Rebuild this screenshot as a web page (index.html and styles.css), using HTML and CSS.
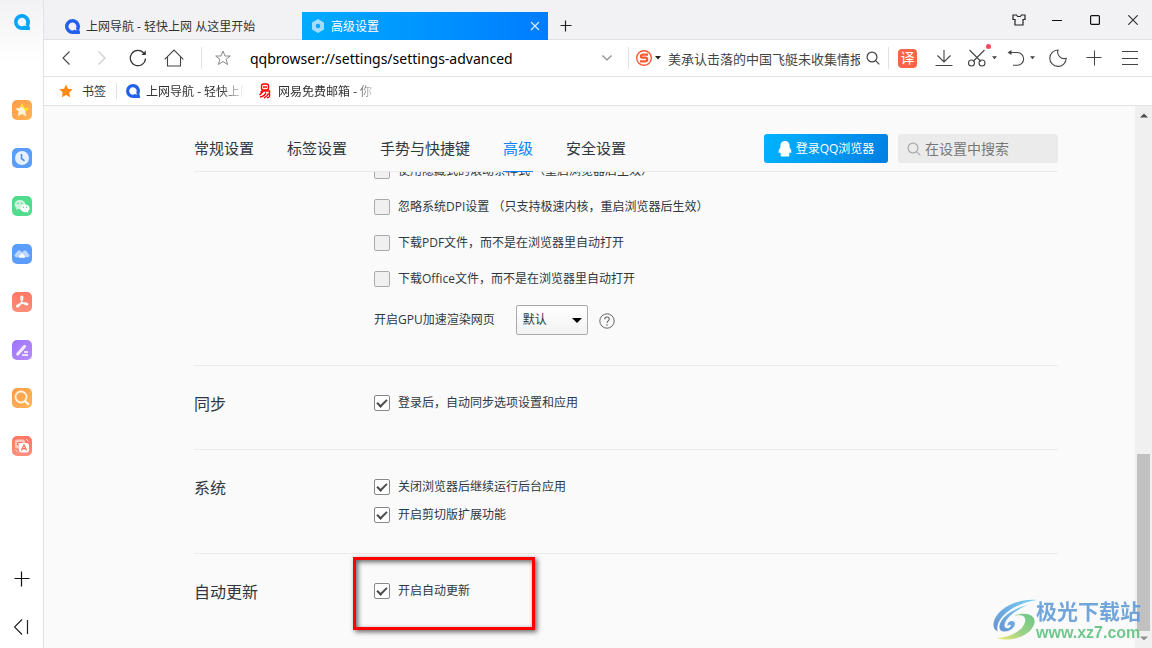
FILE: index.html
```html
<!DOCTYPE html>
<html lang="zh-CN">
<head>
<meta charset="utf-8">
<title>高级设置</title>
<link rel="stylesheet" href="styles.css">
</head>
<body>
<svg class="defs" aria-hidden="true">
  <symbol id="q-logo" viewBox="0 0 16 16">
    <path fill-rule="evenodd" fill="currentColor" d="M8 0a8 8 0 0 1 7.3 11.2c-.2.9.1 1.600.7 2.300V15a1 1 0 0 1-1 1H8A8 8 0 0 1 8 0ZM8 3.800a4.200 4.200 0 1 0 2.200 7.700c1.100.6 2.200.5 2.700.2-.9-.4-1.300-1-1.200-1.800A4.200 4.200 0 0 0 8 3.800Z"/>
  </symbol>
  <symbol id="caret" viewBox="0 0 6 4"><path d="M0 0h6L3 3.500z" fill="currentColor"/></symbol>
  <symbol id="lens" viewBox="0 0 14 14"><g fill="none" stroke="currentColor" stroke-width="1.200"><circle cx="6" cy="6" r="4.900"/><path d="m9.600 9.600 3.700 3.700"/></g></symbol>
</svg>

<aside class="sidebar">
  <button class="side-btn side-logo" aria-label="QQ浏览器"><svg width="16" height="16"><use href="#q-logo"/></svg></button>
  <nav class="side-apps" aria-label="侧边栏">
    <button class="app app-orange" aria-label="收藏"><svg viewBox="0 0 20 20"><path d="m10 3.500 2 4.300 4.700.6-3.400 3.200.9 4.700-4.200-2.300-4.200 2.300.9-4.700-3.400-3.200 4.700-.6z" fill="#fff3d8"/><path d="m10 3.500 2 4.300 4.700.6-3.400 3.200-1.300-3.400-3.300-1.600z" fill="#ffe600"/></svg></button>
    <button class="app app-blue" aria-label="历史"><svg viewBox="0 0 20 20"><circle cx="10" cy="10" r="7" fill="#e6f0ff"/><path d="M9.500 6v4.500l3 2.300" fill="none" stroke="#4c8ff5" stroke-width="1.600"/></svg></button>
    <button class="app app-green" aria-label="微信"><svg viewBox="0 0 20 20"><path d="M8 4c-3.100 0-5.500 2-5.500 4.600 0 1.500.8 2.800 2 3.600L4 14l2.100-1.100 1.900.3c3 0 5.400-2 5.400-4.600S11 4 8 4Z" fill="#c9f5dc"/><path d="M13 8.500c-2.600 0-4.600 1.700-4.600 3.800s2 3.900 4.600 3.900l1.500-.2 1.800.8-.4-1.500c1-.7 1.700-1.800 1.700-3 0-2.100-2-3.800-4.600-3.800Z" fill="#fff"/><g fill="#4cd98b"><circle cx="6.200" cy="7.200" r=".8"/><circle cx="9.800" cy="7.200" r=".8"/><circle cx="11.500" cy="11.300" r=".7"/><circle cx="14.500" cy="11.300" r=".7"/></g></svg></button>
    <button class="app app-blue" aria-label="文档"><svg viewBox="0 0 20 20"><path d="M2.200 11.500 6 6.500h2l2 2 2-2h2l3.800 5-1.800 2-2-.5-1.500 1-2.500-1-2.500 1-1.500-1-2 .5z" fill="#bcd6ff"/><path d="m7 12.200 3-3 3 3-1.500 2-1.500-1-1.500 1z" fill="#fff"/></svg></button>
    <button class="app app-red" aria-label="PDF"><svg viewBox="0 0 20 20"><path d="M9.500 4.300c1.600-.2 1.400 2 .6 4-.8 2.200-2.600 5.700-4.300 6.500-1.500.5-1.300-1.300.3-2.100 2.500-1.300 5.500-1.800 8-1.600 2.200.3 2 2 .1 1.600-2.300-.7-4.600-3.300-5.200-5.600-.3-1.200-.3-2.500.5-2.800Z" fill="none" stroke="#fff" stroke-width="1.400"/></svg></button>
    <button class="app app-purple" aria-label="笔记"><svg viewBox="0 0 20 20"><path d="m5.800 14 6.700-7.500" stroke="#f2eaff" stroke-width="3.200" stroke-linecap="round"/><path d="M12 12h4M10 15h6" stroke="#fff" stroke-width="1.500"/></svg></button>
    <button class="app app-orange" aria-label="搜索"><svg viewBox="0 0 20 20"><circle cx="9" cy="9" r="5.500" fill="none" stroke="#fff3e2" stroke-width="1.800"/><path d="m13 13 3.800 3.800" stroke="#fff" stroke-width="2"/></svg></button>
    <button class="app app-red" aria-label="翻译"><svg viewBox="0 0 20 20"><rect x="3" y="3.500" width="10" height="9" rx="2" fill="#ffc9be"/><path d="M5.500 6.500h5V9h-5z" fill="none" stroke="#ff7b68"/><rect x="7" y="7" width="10" height="9.500" rx="2.500" fill="#fff"/><path d="m9.300 14.500 2.700-5.500 2.700 5.500m-4.500-1.800h3.600" fill="none" stroke="#ff6a56" stroke-width="1.200"/><path d="m14 3 2.500 2.500M3.500 13.500 6 16.500" stroke="#ffd6ce"/></svg></button>
  </nav>
  <button class="side-btn side-foot" aria-label="添加"><svg width="16" height="16" viewBox="0 0 16 16"><path d="M.5 7.500h15M7.500.5v15" stroke="#111" stroke-width="1.200"/></svg></button>
  <button class="side-btn side-foot" aria-label="收起侧边栏"><svg width="16" height="16" viewBox="0 0 16 16"><path d="m8 .5-7.500 7.500L8 15.500M13.500 1v14" fill="none" stroke="#222" stroke-width="1.200"/></svg></button>
</aside>

<div class="browser">
  <header class="tabbar">
    <div class="tab">
      <svg class="blue-logo" width="15" height="15"><use href="#q-logo"/></svg>
      <span class="tab-title">上网导航 - 轻快上网 从这里开始</span>
    </div>
    <div class="tab tab-active">
      <svg width="14" height="14" viewBox="0 0 14 14"><path fill-rule="evenodd" d="m7 0 6 3.500v7L7 14l-6-3.500v-7zM7 4.800a2.200 2.200 0 1 0 0 4.400 2.200 2.200 0 0 0 0-4.400Z" fill="#a3dcff"/></svg>
      <span class="tab-title">高级设置</span>
      <button class="tab-close" aria-label="关闭标签"><svg width="10" height="10" viewBox="0 0 10 10"><path d="m1 1 8 8M9 1 1 9" stroke="#d8eeff" stroke-width="1.200"/></svg></button>
    </div>
    <button class="new-tab" aria-label="新标签"><svg width="12" height="12" viewBox="0 0 12 12"><path d="M.5 5.500h11M5.500.5v11" stroke="#222" stroke-width="1.200"/></svg></button>
    <div class="window-btns">
      <button aria-label="皮肤"><svg width="14" height="12" viewBox="0 0 14 12"><path d="M4.500 1H1v4.500h2V11h8V5.500h2V1H9.500L8.300 2.500H5.700z" fill="none" stroke="#222" stroke-width="1.200"/></svg></button>
      <button aria-label="最小化"><svg width="10" height="10" viewBox="0 0 10 10"><path d="M0 5.500h10" stroke="#111"/></svg></button>
      <button aria-label="最大化"><svg width="10" height="10" viewBox="0 0 10 10"><rect x=".6" y=".6" width="8.800" height="8.800" rx="1" fill="none" stroke="#111" stroke-width="1.200"/></svg></button>
      <button aria-label="关闭"><svg width="10" height="10" viewBox="0 0 10 10"><path d="m.3.300 9.400 9.400M9.700.3.300 9.700" stroke="#333" stroke-width="1.200"/></svg></button>
    </div>
  </header>

  <div class="toolbar">
    <button class="tool" aria-label="后退"><svg width="8" height="14" viewBox="0 0 8 14"><path d="M7.500.5 1 7l6.500 6.500" fill="none" stroke="#444" stroke-width="1.100"/></svg></button>
    <button class="tool" aria-label="前进"><svg width="8" height="14" viewBox="0 0 8 14"><path d="M.5.500 7 7 .5 13.500" fill="none" stroke="#ccc" stroke-width="1.200"/></svg></button>
    <button class="tool" aria-label="刷新"><svg width="18" height="18" viewBox="0 0 18 18"><path d="M16.500 9.500A7.600 7.600 0 1 1 15 4.500" fill="none" stroke="#333" stroke-width="1.200"/><path d="M16.800 1.500v4.500h-4.500z" fill="#333"/></svg></button>
    <button class="tool" aria-label="主页"><svg width="20" height="18" viewBox="0 0 20 18"><path d="M.7 10.300 10 1l9.300 9.300M3.500 8v9h13V8" fill="none" stroke="#444" stroke-width="1.100"/></svg></button>
    <i class="sep sep-nav"></i>
    <button class="tool tool-star" aria-label="收藏此页"><svg width="16" height="16" viewBox="0 0 16 16"><path d="m8 1 2 5h5.300l-4.200 3.300 1.500 5.200L8 11.500l-4.600 3 1.500-5.200L.7 6H6z" fill="none" stroke="#888"/></svg></button>
    <input class="url" type="text" aria-label="地址栏" value="qqbrowser://settings/settings-advanced">
    <button class="tool tool-drop" aria-label="展开地址"><svg width="10" height="6" viewBox="0 0 10 6"><path d="m.5.500 4.500 4.500L9.500.5" fill="none" stroke="#888" stroke-width="1.200"/></svg></button>
    <i class="sep"></i>
    <button class="engine" aria-label="搜索引擎"><svg width="16" height="16" viewBox="0 0 16 16"><circle cx="8" cy="8" r="7.300" fill="none" stroke="#fa5a32" stroke-width="1.400"/><path d="M12 4.700H7c-2.800 0-2.800 3 0 3h2.200c2.700 0 2.700 3.600 0 3.600H4" fill="none" stroke="#fa5a32" stroke-width="2.200"/></svg><svg width="6" height="4" class="dark"><use href="#caret"/></svg></button>
    <input class="web-search" type="text" aria-label="网页搜索" value="美承认击落的中国飞艇未收集情报">
    <button class="go" aria-label="搜索"><svg width="14" height="14"><use href="#lens"/></svg></button>
    <i class="sep"></i>
    <button class="tool tool-trans" aria-label="翻译"><span class="trans">译</span></button>
    <button class="tool" aria-label="下载"><svg width="18" height="18" viewBox="0 0 18 18"><path d="M9 1v12M2.500 6.500 9 13l6.500-6.500M.5 16.500h17" fill="none" stroke="#444" stroke-width="1.100"/></svg></button>
    <button class="tool tool-pair" aria-label="截图"><svg width="20" height="18" viewBox="0 0 20 18"><g fill="none" stroke="#444" stroke-width="1.100"><path d="m2.500 1 11.500 11.500M17.500 1 6 12.500"/><circle cx="4.500" cy="14" r="3"/><circle cx="15" cy="14" r="3"/></g></svg><svg width="5" height="4"><use href="#caret"/></svg><i class="dot"></i></button>
    <button class="tool tool-pair" aria-label="撤销关闭"><svg width="18" height="18" viewBox="0 0 18 18"><path d="M2 3.500h8.500a6 6.300 0 0 1 0 12.800H6" fill="none" stroke="#444" stroke-width="1.100"/><path d="M.5 3.500 4.500 1v5z" fill="#444"/></svg><svg width="5" height="4"><use href="#caret"/></svg></button>
    <button class="tool" aria-label="夜间模式"><svg width="18" height="18" viewBox="0 0 18 18"><path d="M9 1C7.500 6 12 10.700 17.200 9.300A8.200 8.200 0 1 1 9 1Z" fill="none" stroke="#444" stroke-width="1.100"/></svg></button>
    <button class="tool" aria-label="添加扩展"><svg width="16" height="16" viewBox="0 0 16 16"><path d="M.5 7.500h15M8.500.5v15" stroke="#444"/></svg></button>
    <button class="tool" aria-label="菜单"><svg width="16" height="14" viewBox="0 0 16 14"><path d="M0 .5h16M0 7.500h16M0 13.500h16" stroke="#444"/></svg></button>
  </div>

  <nav class="bookmarks" aria-label="书签栏">
    <a class="bm bm-first" href="#bookmarks"><svg width="14" height="14" viewBox="0 0 14 14"><path d="m7 .5 2 4.200 4.700.6-3.400 3.200.8 4.800L7 11l-4.100 2.300.8-4.800L.3 5.300 5 4.700z" fill="#ff8a14"/></svg><span>书签</span></a>
    <i class="sep sep-small"></i>
    <a class="bm bm-fade bm-nav" href="#nav"><svg class="blue-logo" width="14" height="14"><use href="#q-logo"/></svg><span>上网导航 - 轻快上网</span></a>
    <a class="bm bm-fade bm-mail" href="#mail"><svg width="14" height="16" viewBox="0 0 14 16"><g fill="none" stroke="#f00" stroke-width="1.400"><rect x="3.500" y="1" width="7" height="6" rx="2"/><path d="M5 4h4M2.500 9.500 4 8h7.500v4.500c0 1.700-1 2.300-2.500 2M5 8.500 1.500 12M8 9.500c-.5 2-3 4-6 4.500M10.500 10.500c-.8 2-2.500 3.500-4.500 4.500"/></g></svg><span>网易免费邮箱 - 你</span></a>
  </nav>

  <main class="page">
    <div class="settings">
      <header class="settings-head">
        <nav class="settings-nav" aria-label="设置分类">
          <a href="#general">常规设置</a>
          <a href="#tabs">标签设置</a>
          <a href="#gestures">手势与快捷键</a>
          <a href="#advanced" class="current">高级</a>
          <a href="#security">安全设置</a>
        </nav>
        <button class="login"><svg width="14" height="16" viewBox="0 0 14 16"><path d="M7 0C3.800 0 2.400 2.300 2.400 5v1.600C1.200 8 .5 9.700.6 11.300c.1 1 .8.900 1.500-.1.200.8.600 1.500 1.200 2.100-1.400.6-1.200 2.100.6 2.300H7h3.100c1.800-.2 2-1.700.6-2.300.6-.6 1-1.300 1.200-2.100.7 1 1.400 1.100 1.500.1.100-1.600-.6-3.300-1.800-4.700V5c0-2.700-1.400-5-4.600-5Z" fill="#fff"/></svg>登录QQ浏览器</button>
        <label class="find"><svg width="14" height="14"><use href="#lens"/></svg><input type="text" placeholder="在设置中搜索" aria-label="在设置中搜索"></label>
      </header>

      <div class="scroll">
        <section class="group group-top">
          <div class="options roomy">
            <label><input type="checkbox">使用隐藏式的滚动条样式&nbsp;（重启浏览器后生效）</label>
            <label><input type="checkbox">忽略系统DPI设置&nbsp;（只支持极速内核，重启浏览器后生效）</label>
            <label><input type="checkbox">下载PDF文件，而不是在浏览器里自动打开</label>
            <label><input type="checkbox">下载Office文件，而不是在浏览器里自动打开</label>
            <div class="gpu">
              <label for="gpu">开启GPU加速渲染网页</label>
              <span class="select"><select id="gpu"><option>默认</option><option>开启</option><option>关闭</option></select></span>
              <button class="help" aria-label="帮助"><svg width="16" height="16" viewBox="0 0 16 16"><g fill="none" stroke="#666"><circle cx="8" cy="8" r="7.200"/><path d="M5.700 6.200c0-3 4.600-3 4.600-.1C10.300 8 8 7.900 8 9.900" stroke-width="1.100"/></g><circle cx="8" cy="12" r=".8" fill="#666"/></svg></button>
            </div>
          </div>
        </section>
        <section class="group">
          <h2>同步</h2>
          <div class="options">
            <label><input type="checkbox" checked>登录后，自动同步选项设置和应用</label>
          </div>
        </section>
        <section class="group">
          <h2>系统</h2>
          <div class="options">
            <label><input type="checkbox" checked>关闭浏览器后继续运行后台应用</label>
            <label><input type="checkbox" checked>开启剪切版扩展功能</label>
          </div>
        </section>
        <section class="group">
          <h2>自动更新</h2>
          <div class="options">
            <label class="marked"><input type="checkbox" checked>开启自动更新</label>
          </div>
        </section>
      </div>
    </div>
    <div class="scrollbar" aria-hidden="true">
      <svg width="8" height="5" viewBox="0 0 8 5"><path d="m0 4.500 4-4 4 4z" fill="#505050"/></svg>
      <div class="thumb"></div>
      <svg width="8" height="5" viewBox="0 0 8 5"><path d="m0 .5 4 4 4-4z" fill="#909090"/></svg>
    </div>
  </main>
</div>

<div class="watermark">
  <svg width="44" height="42" viewBox="0 0 44 42">
    <defs>
      <linearGradient id="wm-blue" x1="0" y1="1" x2="1" y2="0"><stop offset="0" stop-color="#4d80cc"/><stop offset="1" stop-color="#62c8f2"/></linearGradient>
      <linearGradient id="wm-green" x1="0" y1="1" x2="1" y2="0"><stop offset="0" stop-color="#f3e85c"/><stop offset=".45" stop-color="#8acb73"/><stop offset="1" stop-color="#55bd76"/></linearGradient>
    </defs>
    <path d="M44 1C24-1 3 10 .5 24c-.5 4 1 7 4 8.500C2 20 18 5 44 1Z" fill="url(#wm-blue)"/>
    <path d="M35 6C21 9 8 18 6.500 26.500 5.500 33 13 34 18 30.500c5-3.500 5-8.500 1-8.500-3 0-5 2.500-4.500 5 2-2 4-1.500 3 .5-1.500 2.500-6 2.500-6-1C11.500 20 22 11 35 6Z" fill="url(#wm-blue)"/>
    <path d="M21 17c9-2.500 13 1 10.500 7.500C28.500 32 18 38 4 39c15 5 35-3 37.500-15 1.500-8-9-12-20.500-7Z" fill="url(#wm-green)"/>
  </svg>
  <div class="wm-text"><span class="wm-name">极光下载站</span><span class="wm-site">www.xz7.com</span></div>
</div>
</body>
</html>
```

FILE: styles.css
```css
*, *::after { box-sizing: border-box; }

body {
  margin: 0;
  height: 100vh;
  display: flex;
  overflow: hidden;
  position: relative;
  background: #fff;
  color: #333;
  font: 12px/16px "Open Sans", "Noto Sans CJK SC", sans-serif;
}

button {
  display: flex;
  align-items: center;
  justify-content: center;
  padding: 0;
  border: 0;
  background: none;
  color: inherit;
  font: inherit;
}

input, select {
  min-width: 0;
  margin: 0;
  padding: 0;
  border: 0;
  outline: 0;
  background: none;
  color: inherit;
  font: inherit;
}

a { color: inherit; text-decoration: none; }
svg { display: block; flex: none; }
.defs { position: absolute; width: 0; height: 0; }

/* Sidebar */
.sidebar {
  flex: none;
  width: 44px;
  display: flex;
  flex-direction: column;
  border-right: 1px solid #e2e2e4;
  background: linear-gradient(#f2f2f4, #fff 64px);
}
.side-btn { flex: none; height: 48px; }
.side-foot { padding-top: 6px; }
.side-logo { height: 44px; color: #0aa5fa; }
.side-apps {
  flex: 1;
  display: flex;
  flex-direction: column;
  align-items: center;
  gap: 28px;
  padding-top: 56px;
}
.app { width: 20px; height: 20px; border-radius: 5px; }
.app svg { width: 20px; height: 20px; }
.app-orange { background: linear-gradient(135deg, #ff9c4a, #ffb455); }
.app-blue { background: #5b9dfc; }
.app-green { background: #50dc8c; }
.app-red { background: linear-gradient(#ff7763, #ff8f7c); }
.app-purple { background: linear-gradient(135deg, #9d74fb, #b78cfc); }

.browser { flex: 1; min-width: 0; display: flex; flex-direction: column; }

/* Tabs */
.tabbar {
  flex: none;
  height: 40px;
  display: flex;
  align-items: flex-end;
  padding-left: 12px;
  background: #f2f2f4;
  box-shadow: inset 0 -1px #e0e0e2;
}
.tab {
  width: 246px;
  height: 28px;
  display: flex;
  align-items: center;
  gap: 6px;
  padding: 0 8px 0 9px;
  white-space: nowrap;
}
.tab-title { flex: 1; padding-top: 2px; }
.tab-active { color: #fff; background: linear-gradient(90deg, #00acff, #007cff); }
.tab-close { width: 10px; height: 28px; }
.blue-logo { color: #2460ee; }
.new-tab { width: 36px; height: 28px; }
.window-btns { margin-left: auto; align-self: stretch; display: flex; }
.window-btns button { width: 38px; height: 40px; }

/* Toolbar */
.toolbar {
  flex: none;
  height: 37px;
  display: flex;
  align-items: center;
  padding: 0 4px;
  border-bottom: 1px solid #e2e2e4;
  color: #444;
}
.tool { flex: none; width: 36px; height: 36px; }
.sep { flex: none; width: 1px; height: 22px; background: #e2e2e4; }
.sep-nav { margin: 0 3px 0 9px; }
.sep-small { height: 16px; margin-left: 10px; }
.url {
  flex: 1;
  height: 30px;
  padding-left: 9px;
  color: #000;
  font: 14px/20px "Noto Sans", "Noto Sans CJK SC", sans-serif;
}
.tool-drop { margin-right: 3px; }
.engine { gap: 3px; width: 39px; height: 36px; }
.dark { color: #222; }
.web-search { width: 192px; height: 30px; font-size: 13px; }
.go { width: 28px; height: 36px; padding-right: 2px; }
.tool-trans { width: 37px; }
.trans {
  width: 19px;
  height: 19px;
  border-radius: 4px;
  background: #ff6347;
  color: #fff;
  font-size: 14px;
  line-height: 18px;
}
.tool-pair { position: relative; width: 39px; gap: 5px; }
.dot {
  position: absolute;
  top: 4px;
  right: 10px;
  width: 5px;
  height: 5px;
  border-radius: 50%;
  background: #f5485b;
}

/* Bookmarks */
.bookmarks {
  flex: none;
  height: 29px;
  display: flex;
  align-items: center;
  padding-left: 15px;
  border-bottom: 1px solid #e2e2e4;
}
.bm { display: flex; align-items: center; gap: 6px; white-space: nowrap; }
.bm span { padding-top: 2px; }
.bm-first { gap: 9px; }
.bm-fade {
  overflow: hidden;
  mask-image: linear-gradient(90deg, #000 80%, transparent);
}
.bm-nav { width: 118px; margin-left: 9px; }
.bm-mail { width: 120px; margin-left: 14px; }

/* Settings page */
.page { flex: 1; min-height: 0; display: flex; background: #fafafa; }
.settings {
  flex: 1;
  min-width: 0;
  display: flex;
  flex-direction: column;
  padding: 0 77px 0 150px;
  color: #2f3740;
}
.settings-head {
  flex: none;
  height: 66px;
  display: flex;
  align-items: flex-end;
  border-bottom: 1px solid #eaeaea;
}
.settings-nav {
  flex: 1;
  display: flex;
  gap: 33px;
  margin-bottom: -1px;
  font-size: 15px;
  line-height: 20px;
  white-space: nowrap;
}
.settings-nav a { padding-bottom: 13px; border-bottom: 1px solid transparent; }
.settings-nav .current { color: #0a84f5; border-color: #0a84f5; }
.login {
  width: 124px;
  height: 29px;
  gap: 4px;
  margin: 0 10px 8px 0;
  border-radius: 3px;
  background: linear-gradient(110deg, #00b4ff, #007fe3);
  color: #fff;
  white-space: nowrap;
}
.find {
  width: 160px;
  height: 29px;
  display: flex;
  align-items: center;
  gap: 4px;
  margin-bottom: 8px;
  padding: 0 9px;
  border-radius: 3px;
  background: #ebebeb;
  color: #aaa;
}
.find input { flex: 1; font-size: 14px; }
.find input::placeholder { color: #777; opacity: 1; }

.scroll { flex: 1; min-height: 0; overflow: hidden; }
.group {
  min-height: 84px;
  display: flex;
  padding: 23px 0 24px;
  border-bottom: 1px solid #eaeaea;
}
.group:last-child { border: 0; }
.group-top { margin-top: -19px; padding: 0 0 30px 180px; }
.group h2 {
  flex: none;
  width: 180px;
  margin: 0;
  font-size: 16px;
  font-weight: 400;
  line-height: 30px;
}
.options { display: flex; flex-direction: column; align-items: flex-start; }
.options > label { display: flex; align-items: center; gap: 8px; height: 28px; }
.roomy > label { height: 36px; }

input[type="checkbox"] {
  appearance: none;
  position: relative;
  width: 16px;
  height: 16px;
  border: 1px solid #aaa;
  border-radius: 2px;
  background: #f0f0f0;
}
input[type="checkbox"]:checked { border-color: #888; background: #fff; }
input[type="checkbox"]:checked::after {
  content: "";
  position: absolute;
  left: 2px;
  top: 3px;
  width: 10px;
  height: 6px;
  border: solid #4a4a4a;
  border-width: 0 0 2px 2px;
  transform: rotate(-45deg);
}

.gpu { display: flex; align-items: center; margin-top: 8px; }
.select { position: relative; margin: 0 11px 0 21px; }
.select select {
  display: block;
  appearance: none;
  width: 72px;
  height: 30px;
  padding-left: 6px;
  border: 1px solid #aaa;
  border-radius: 2px;
  background: linear-gradient(#fff, #f2f2f2);
}
.select::after {
  content: "";
  position: absolute;
  right: 6px;
  top: 13px;
  border: solid transparent;
  border-width: 5px 5px 0;
  border-top-color: #000;
}
.help { padding-top: 2px; }

/* Highlight frame around the marked option */
.marked { position: relative; }
.marked::after {
  content: "";
  position: absolute;
  left: -21px;
  top: -20px;
  width: 182px;
  height: 73px;
  border: 3px solid #f00;
  box-shadow: 2px 2px 5px rgba(0, 0, 0, .6), inset 2px 2px 5px rgba(0, 0, 0, .6);
}

/* Scrollbar */
.scrollbar {
  flex: none;
  width: 17px;
  display: flex;
  flex-direction: column;
  align-items: center;
  justify-content: space-between;
  padding: 7px 0;
  background: #f0f0f0;
}
.thumb { width: 13px; height: 177px; margin: auto 0 5px; background: #c1c1c1; }

/* Watermark */
.watermark {
  position: absolute;
  right: 11px;
  bottom: 6px;
  display: flex;
  align-items: center;
  opacity: .85;
  pointer-events: none;
}
.wm-text { display: flex; flex-direction: column; margin-left: -1px; font-weight: 700; white-space: nowrap; }
.wm-name { color: #5b98d6; font-size: 21px; line-height: 26px; }
.wm-site { color: #58bf7a; font: 700 16px/18px "Liberation Sans", Arial, sans-serif; }
```
